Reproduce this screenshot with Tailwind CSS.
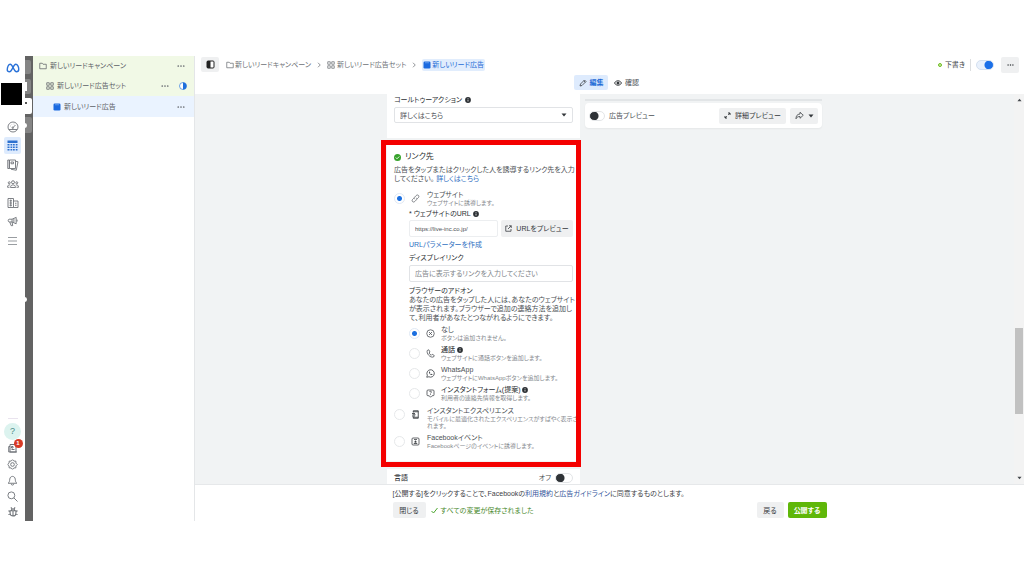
<!DOCTYPE html>
<html lang="ja">
<head>
<meta charset="utf-8">
<meta name="viewport" content="width=device-width, initial-scale=1">
<title>新しいリード広告</title>
<script src="https://cdn.jsdelivr.net/npm/@tailwindcss/browser@4"></script>
</head>
<body class="bg-white">
<svg class="hidden" aria-hidden="true">
  <symbol id="folder" viewBox="0 0 16 16"><path d="M1.5 13.5v-11h5l1.5 2h6.500v9z" fill="none" stroke="currentColor" stroke-width="1.500" stroke-linejoin="round"/></symbol>
  <symbol id="grid" viewBox="0 0 16 16"><path d="M1.500 1.500h5v5h-5zM9.500 1.500h5v5h-5zM1.500 9.500h5v5h-5zM9.500 9.500h5v5h-5z" fill="none" stroke="currentColor" stroke-width="1.500" stroke-linejoin="round"/></symbol>
  <symbol id="ad" viewBox="0 0 16 16"><rect x="1" y="1" width="14" height="14" rx="2.500" fill="#1b6ae0"/><path d="M4 3.500h8" stroke="#8fbaf7" stroke-width="1.200"/></symbol>
  <symbol id="dots" viewBox="0 0 16 4"><circle cx="2.500" cy="2" r="1.700"/><circle cx="8" cy="2" r="1.700"/><circle cx="13.500" cy="2" r="1.700"/></symbol>
  <symbol id="info" viewBox="0 0 12 12"><circle cx="6" cy="6" r="5.800" fill="#2b2f33"/><path d="M6 5.200v3.800M6 2.500v1.500" stroke="#fff" stroke-width="1.500"/></symbol>
  <symbol id="caret" viewBox="0 0 12 8"><path d="M1 1h10L6 7z" fill="currentColor"/></symbol>
  <symbol id="chev" viewBox="0 0 8 12"><path d="M2 1.500L6.500 6 2 10.500" fill="none" stroke="currentColor" stroke-width="1.500"/></symbol>
</svg>
<div class="flex h-screen pt-14 pb-[55px] font-['Liberation_Sans','Noto_Sans_CJK_JP',sans-serif] text-[7px] leading-[9px] whitespace-nowrap text-[#4b4f54] [font-feature-settings:'palt']">

  <nav class="flex w-[25px] shrink-0 flex-col items-center text-[#6f7378]" aria-label="メイン">
    <a href="#" aria-label="Meta" class="mt-1 flex h-4 items-center"><svg class="h-[10px] w-[14px]" viewBox="0 0 28 20"><path d="M2.500 14C2.500 8 5 2.500 8.500 2.500c5 0 7 15 12.500 15 3 0 4.500-2 4.500-5 0-5-2.500-10-6-10-5 0-7 15-12.500 15-3 0-4.500-1.500-4.500-3.500z" fill="none" stroke="#2a72d8" stroke-width="2.800"/></svg></a>
    <div class="mt-[7px] mr-[2px] h-[22px] w-[21px] bg-black"></div>
    <div class="mt-3 flex flex-col items-center">
      <a href="#" aria-label="概要" class="flex h-[19px] items-center"><svg class="size-3" viewBox="0 0 24 24" fill="none" stroke="currentColor" stroke-width="1.800"><circle cx="12" cy="12" r="10"/><path d="M4 17h16M12 13l5-5M6 10h1M9 6.500l.500.500M14 5.500v1"/><circle cx="11.500" cy="13.500" r="1.500"/></svg></a>
      <a href="#" aria-label="キャンペーン" class="flex h-[19px] items-center"><span class="flex size-[17px] items-center justify-center rounded-xs bg-[#deebfd]"><svg class="size-[11px]" viewBox="0 0 22 22" fill="#2d71cf"><path d="M1 1h20v5H1zM1 8h4v3H1zM7 8h3.500v3H7zM12 8h3.500v3H12zM17.500 8H21v3h-3.500zM1 13h4v3H1zM7 13h3.500v3H7zM12 13h3.500v3H12zM17.500 13H21v3h-3.500zM1 18h4v3H1zM7 18h3.500v3H7zM12 18h3.500v3H12zM17.500 18H21v3h-3.500z"/></svg></span></a>
      <a href="#" aria-label="広告レポート" class="flex h-[19px] items-center"><svg class="size-3" viewBox="0 0 24 24" fill="none" stroke="currentColor" stroke-width="1.800"><path d="M1.500 2h3v17h-3zM5 2h12v17H5zM8 6h5v3.500H8zM17 4.500l5 1-3.500 17L8 20.500"/></svg></a>
      <a href="#" aria-label="オーディエンス" class="flex h-[19px] items-center"><svg class="size-3" viewBox="0 0 24 24" fill="none" stroke="currentColor" stroke-width="1.800"><circle cx="12" cy="8.500" r="3"/><circle cx="4.500" cy="9.500" r="2"/><circle cx="19.500" cy="9.500" r="2"/><path d="M7 19c0-7 10-7 10 0zM6.500 14C3 13 1 15 1 18.500h4M17.500 14c3.500-1 5.500 1 5.500 4.500h-4"/></svg></a>
      <a href="#" aria-label="ビジネス設定" class="flex h-[19px] items-center"><svg class="size-3" viewBox="0 0 24 24" fill="none" stroke="currentColor" stroke-width="1.800"><path d="M2 3h11v18H2zM13 8h9v13h-9M5 7.500h5M5 12h5M5 16.500h5M16 12.500h3M16 16.500h3M7.500 5v14"/></svg></a>
      <a href="#" aria-label="広告" class="flex h-[19px] items-center"><svg class="size-[11px]" viewBox="0 0 24 24" fill="none" stroke="currentColor" stroke-width="2"><path d="M20 3v14l-9-4H4.500C2 13 2 7 4.500 7H11zM11 7v6M6 13l3 8h3.500L11 13M15 6v8M22 8v4"/></svg></a>
      <a href="#" aria-label="すべてのツール" class="flex h-[19px] items-center"><svg class="h-2 w-[9px]" viewBox="0 0 9 8"><path d="M0 .500h9M0 4h9M0 7.500h9" stroke="#999da1"/></svg></a>
    </div>
    <div class="mt-auto mb-1 h-px w-[10px] bg-[#e9e3ee]"></div>
    <a href="#" aria-label="ヘルプ" class="flex size-[17px] items-center justify-center rounded-full bg-[#dcf3ef] text-[9px] text-[#4a8a88]">?</a>
    <a href="#" aria-label="ニュース" class="relative flex h-4 items-center"><svg class="size-[10px]" viewBox="0 0 20 20" fill="none" stroke="currentColor" stroke-width="2"><path d="M4 3h12v15H4zM4 7H1.500v11H18M7 7h3v3H7zM7 13h6"/></svg><span class="absolute -top-[1px] left-[6px] flex size-[9px] items-center justify-center rounded-full bg-[#d93a25] text-[6px] leading-[9px] font-bold text-white">1</span></a>
    <a href="#" aria-label="設定" class="flex h-4 items-center"><svg class="size-[11px]" viewBox="0 0 24 24" fill="none" stroke="currentColor" stroke-width="2"><path d="M12 1.500l3 3 4.300.200.200 4.300 3 3-3 3-.200 4.300-4.300.200-3 3-3-3-4.300-.200-.200-4.300-3-3 3-3 .200-4.300 4.300-.200z" stroke-linejoin="round"/><circle cx="12" cy="12" r="4"/></svg></a>
    <a href="#" aria-label="お知らせ" class="flex h-4 items-center"><svg class="size-[11px]" viewBox="0 0 24 24" fill="none" stroke="currentColor" stroke-width="2"><path d="M2.500 18c3-2 3-5 3.500-9 1-8 11-8 12 0 .500 4 .500 7 3.500 9zM9 19c0 4 6 4 6 0"/></svg></a>
    <a href="#" aria-label="検索" class="flex h-4 items-center"><svg class="size-[11px]" viewBox="0 0 24 24" fill="none" stroke="currentColor" stroke-width="2"><circle cx="9.500" cy="9.500" r="7.500"/><path d="M15 15l8 8"/></svg></a>
    <a href="#" aria-label="問題を報告" class="mb-px flex h-4 items-center"><svg class="size-[10px]" viewBox="0 0 24 24" fill="none" stroke="currentColor" stroke-width="2.600"><path d="M5 9h14v6c0 9-14 9-14 0zM8 9c0-6 8-6 8 0M12 9v13M1 9l4 2M23 9l-4 2M1 18l5-2M23 18l-5-2M7 1l2 3M17 1l-2 3"/></svg></a>
  </nav>

  <div class="relative w-2 shrink-0 overflow-hidden bg-[#636363]">
    <span class="absolute top-1 left-0 h-[14px] w-[6px] rounded-r-xs bg-[#858585]"></span>
    <span class="absolute top-[23px] left-0 h-[15px] w-[6px] rounded-r-xs bg-[#858585]"></span>
    <span class="absolute top-[26px] left-0 h-[9px] w-[2px] bg-white"></span>
    <span class="absolute top-[42px] left-0 h-4 w-[7px] rounded-r-xs bg-white"></span>
    <span class="absolute top-[46px] left-0 h-[2px] w-[2px] bg-[#555]"></span>
    <span class="absolute top-[61px] left-0 h-4 w-[7px] rounded-r-xs bg-[#858585]"></span>
    <span class="absolute top-[67px] -left-[3px] size-[5px] rounded-full bg-white"></span>
    <span class="absolute top-[241px] -left-[3px] size-[5px] rounded-full bg-white"></span>
  </div>

  <aside class="w-[162px] shrink-0 border-r border-[#e4e6e8] text-[#5d6166]">
    <div class="flex h-[19px] items-center bg-[#f1f9e6] pr-2 pl-[6px]">
      <svg class="size-2"><use href="#folder"/></svg><span class="ml-[3px] flex-1">新しいリードキャンペーン</span>
      <button aria-label="メニュー" class="mr-px"><svg class="h-[2px] w-2 fill-[#6b6f74]"><use href="#dots"/></svg></button>
    </div>
    <div class="flex h-[21px] items-center bg-[#f1f9e6] pr-[7px] pl-[13px]">
      <svg class="size-2"><use href="#grid"/></svg><span class="ml-[3px] flex-1">新しいリード広告セット</span>
      <button aria-label="メニュー" class="mr-[10px]"><svg class="h-[2px] w-2 fill-[#6b6f74]"><use href="#dots"/></svg></button>
      <svg class="size-2" viewBox="0 0 16 16"><circle cx="8" cy="8" r="7" fill="#fff" stroke="#3b82dd" stroke-width="1.500"/><path d="M8 1a7 7 0 010 14z" fill="#1f6fdc"/></svg>
    </div>
    <div class="flex h-[21px] items-center bg-[#eaf3ff] pr-2 pl-5">
      <svg class="size-2"><use href="#ad"/></svg><span class="ml-[3px] flex-1">新しいリード広告</span>
      <button aria-label="メニュー" class="mr-px"><svg class="h-[2px] w-2 fill-[#6b6f74]"><use href="#dots"/></svg></button>
    </div>
  </aside>

  <div class="flex min-w-0 flex-1 flex-col">
    <header class="h-[38px] shrink-0">
      <div class="flex h-[17px] items-center pr-[5px] pl-[6px] text-[#6d7176]">
        <button aria-label="パネルを切り替える" class="flex h-[15px] w-[18px] items-center justify-center rounded-xs bg-[#eff0f1]"><svg class="size-[9px]" viewBox="0 0 18 18"><rect x="2" y="2" width="14" height="14" rx="2" fill="#fff" stroke="#222" stroke-width="2"/><path d="M2 2h7v14H2z" fill="#222"/></svg></button>
        <a href="#" class="ml-[7px] flex items-center gap-px"><svg class="size-2"><use href="#folder"/></svg>新しいリードキャンペーン</a>
        <svg class="mx-[6px] h-[6px] w-1"><use href="#chev"/></svg>
        <a href="#" class="flex items-center gap-[2px]"><svg class="size-2"><use href="#grid"/></svg>新しいリード広告セット</a>
        <svg class="mx-[6px] h-[6px] w-1"><use href="#chev"/></svg>
        <a href="#" class="flex h-3 items-center gap-px rounded-xs bg-[#e1edfd] px-px text-[#1f6bd6]"><svg class="size-2"><use href="#ad"/></svg>新しいリード広告</a>
        <span class="ml-auto flex items-center gap-[3px] text-[#3d4145]"><i class="size-[4px] rounded-full border border-[#6fbd22] bg-[#c9eaa2]"></i>下書き</span>
        <span class="mx-[5px] h-3 w-px bg-[#dcdee0]"></span>
        <input type="checkbox" role="switch" checked aria-label="オンオフ" class="h-[10px] w-[18px] appearance-none rounded-full border border-[#d4e0f0] bg-[#e9f1fc] bg-[radial-gradient(circle_at_12px_4px,#1b70e8_4px,transparent_5px)]">
        <button aria-label="その他" class="ml-[7px] flex h-4 w-[18px] items-center justify-center rounded-xs bg-[#eff0f1]"><svg class="h-[2px] w-[7px] fill-[#33373b]"><use href="#dots"/></svg></button>
      </div>
      <div class="mt-[2px] flex justify-center">
        <button class="flex h-[15px] w-[34px] items-center justify-center gap-[3px] rounded-xs bg-[#deebfd] font-bold text-[#1f6bd6]"><svg class="size-2" viewBox="0 0 16 16" fill="none" stroke="#33373b" stroke-width="1.500"><path d="M2 14l1-4 8-8 3 3-8 8zM9.500 3.500l3 3"/></svg>編集</button>
        <button class="flex h-[15px] w-[37px] items-center justify-center gap-[3px]"><svg class="size-2" viewBox="0 0 16 16"><path d="M1 8c3-6 11-6 14 0-3 6-11 6-14 0z" fill="none" stroke="#33373b" stroke-width="1.800"/><circle cx="8" cy="8" r="3" fill="#33373b"/></svg>確認</button>
      </div>
    </header>

    <div class="flex min-h-0 flex-1 bg-[#f1f3f4]">
      <main class="flex min-w-0 flex-1 justify-center gap-[5px] overflow-hidden">
        <div class="relative w-[193px] shrink-0">
          <section class="bg-white px-[7px] pt-px pb-[15px]">
            <label for="cta" class="flex items-center gap-[3px] text-[#2b2f33]">コールトゥーアクション<svg class="size-[6px]"><use href="#info"/></svg></label>
            <div class="relative mt-[3px]">
              <select id="cta" class="block h-4 w-full appearance-none rounded-xs border border-[#e1e3e6] bg-white px-[5px] [font-feature-settings:'palt']"><option>詳しくはこちら</option></select>
              <svg class="pointer-events-none absolute top-[6px] right-[6px] h-1 w-[6px] text-[#33373b]"><use href="#caret"/></svg>
            </div>
          </section>

          <section class="mt-[6px] bg-white px-[7px] pt-2 pb-[11px]">
            <h2 class="flex items-center gap-1 text-[8px] leading-[10px] text-[#2b2f33]"><svg class="size-[7px]" viewBox="0 0 14 14"><circle cx="7" cy="7" r="7" fill="#37a32c"/><path d="M3.500 7l2.500 2.500L10.500 5" fill="none" stroke="#fff" stroke-width="1.800"/></svg>リンク先</h2>
            <p class="mt-[3px]">広告をタップまたはクリックした人を誘導するリンク先を入力<br>してください。 <a href="#" class="text-[#2f6fbf]">詳しくはこちら</a></p>
            <div class="mt-[7px] flex items-center">
              <input type="radio" name="dest" id="d1" checked class="size-[11px] appearance-none rounded-full border border-[#e0e9f5] bg-white checked:bg-[radial-gradient(circle,#1b6fe0_2px,transparent_3px)]">
              <svg class="mr-[7px] ml-[6px] size-[9px]" viewBox="0 0 18 18" fill="none" stroke="#5a5e63" stroke-width="1.500"><path d="M7.500 10.500c-2-2-1-3.500 0-4.500l3-3c3-3 7 1 4.500 4L12.500 9.500M10.500 7.500c2 2 1 3.500 0 4.500l-3 3c-3 3-7-1-4.500-4L5.500 8.500"/></svg>
              <label for="d1"><span class="block leading-[10px]">ウェブサイト</span><span class="block text-[6px] leading-[7px] text-[#85898e]">ウェブサイトに誘導します。</span></label>
            </div>
            <div class="ml-[15px]">
              <label for="url" class="mt-[2px] flex items-center gap-[2px] text-[#2b2f33]">* ウェブサイトのURL<svg class="size-[6px]"><use href="#info"/></svg></label>
              <div class="mt-[2px] flex gap-[3px]">
                <input id="url" type="text" value="https://live-inc.co.jp/" class="h-[17px] w-[89px] rounded-xs border border-[#eceef0] px-[5px] text-[6px]">
                <button class="flex min-w-0 flex-1 items-center justify-center gap-1 rounded-xs bg-[#eff0f1] text-[#33373b]"><svg class="size-[7px]" viewBox="0 0 14 14" fill="none" stroke="#33373b" stroke-width="1.500"><path d="M6 2H1.500v10.500H12V8M8 1.500h4.500V6M12.500 1.500L6 8"/></svg>URLをプレビュー</button>
              </div>
              <a href="#" class="mt-[3px] block text-[#2f6fbf]">URLパラメーターを作成</a>
              <label for="disp" class="mt-1 block text-[#2b2f33]">ディスプレイリンク</label>
              <input id="disp" type="text" placeholder="広告に表示するリンクを入力してください" class="mt-[3px] block h-[17px] w-full rounded-xs border border-[#e1e3e6] px-[5px] placeholder:text-[#808489]">
              <h3 class="mt-1 text-[#2b2f33]">ブラウザーのアドオン</h3>
              <p>あなたの広告をタップした人には、あなたのウェブサイト<br>が表示されます。ブラウザーで追加の連絡方法を追加し<br>て、利用者があなたとつながれるようにできます。</p>
              <div class="mt-[3px] flex flex-col gap-[3px]">
                <div class="flex items-center">
                  <input type="radio" name="addon" id="a1" checked class="size-[11px] appearance-none rounded-full border border-[#e0e9f5] bg-white checked:bg-[radial-gradient(circle,#1b6fe0_2px,transparent_3px)]">
                  <svg class="mr-[6px] ml-[6px] size-[9px]" viewBox="0 0 18 18" fill="none" stroke="#44484d" stroke-width="1.500"><circle cx="9" cy="9" r="7.500"/><path d="M6 6l6 6M12 6l-6 6"/></svg>
                  <label for="a1"><span class="block leading-[10px]">なし</span><span class="block text-[6px] leading-[7px] text-[#85898e]">ボタンは追加されません。</span></label>
                </div>
                <div class="flex items-center">
                  <input type="radio" name="addon" id="a2" class="size-[11px] appearance-none rounded-full border border-[#e6e8ea] bg-white checked:bg-[radial-gradient(circle,#1b6fe0_2px,transparent_3px)]">
                  <svg class="mr-[6px] ml-[6px] size-[9px]" viewBox="0 0 18 18" fill="none" stroke="#44484d" stroke-width="1.500"><path d="M2.500 3l3-1.500L8 6 6 8c1 2 2.500 3.500 4.500 4.500l2-2 4 2.500-1.500 3C8 18 .500 9 2.500 3z"/></svg>
                  <label for="a2"><span class="flex items-center gap-[2px] leading-[10px] font-medium text-[#33373b]">通話<svg class="size-[6px]"><use href="#info"/></svg></span><span class="block text-[6px] leading-[7px] text-[#85898e]">ウェブサイトに通話ボタンを追加します。</span></label>
                </div>
                <div class="flex items-center">
                  <input type="radio" name="addon" id="a3" class="size-[11px] appearance-none rounded-full border border-[#e6e8ea] bg-white checked:bg-[radial-gradient(circle,#1b6fe0_2px,transparent_3px)]">
                  <svg class="mr-[6px] ml-[6px] size-[9px]" viewBox="0 0 18 18" fill="none" stroke="#44484d" stroke-width="1.700"><path d="M1.500 16.500l1.200-4A7.400 7.400 0 115.800 15.500z"/><path d="M6 5.500c-1 3 3.500 7.500 6.500 6.500l.500-1.500-2-1-1 1C8.500 10 8 9 7.500 8l1-1-1-2z" fill="#44484d" stroke="none"/></svg>
                  <label for="a3"><span class="block leading-[10px]">WhatsApp</span><span class="block text-[6px] leading-[7px] text-[#85898e]">ウェブサイトにWhatsAppボタンを追加します。</span></label>
                </div>
                <div class="flex items-center">
                  <input type="radio" name="addon" id="a4" class="size-[11px] appearance-none rounded-full border border-[#e6e8ea] bg-white checked:bg-[radial-gradient(circle,#1b6fe0_2px,transparent_3px)]">
                  <svg class="mr-[6px] ml-[6px] size-[9px]" viewBox="0 0 18 18" fill="none" stroke="#44484d" stroke-width="1.600"><path d="M4 2h10q2 0 2 2v7.500q0 2-2 2h-2L9 16.500l-2.500-3H4q-2 0-2-2V4q0-2 2-2zM7 6c0-2 4-2 4 0 0 1.500-2 1.500-2 3M9 10.500V12"/></svg>
                  <label for="a4"><span class="flex items-center gap-[2px] leading-[10px] text-[#2b2f33]">インスタントフォーム(提案)<svg class="size-[6px]"><use href="#info"/></svg></span><span class="block text-[6px] leading-[7px] text-[#85898e]">利用者の連絡先情報を取得します。</span></label>
                </div>
              </div>
            </div>
            <div class="mt-1 flex items-start">
              <input type="radio" name="dest" id="d2" class="mt-[3px] size-[11px] shrink-0 appearance-none rounded-full border border-[#e6e8ea] bg-white checked:bg-[radial-gradient(circle,#1b6fe0_2px,transparent_3px)]">
              <svg class="mt-1 mr-[7px] ml-[6px] size-[9px] shrink-0" viewBox="0 0 18 18" fill="none" stroke="#33373b" stroke-width="1.700"><path d="M4.500 5V1.500h10v15h-10V13M4.500 3.500h10M4.500 14.500h10M2 7h6M3 9.500h6M2 12h6"/></svg>
              <label for="d2" class="min-w-0"><span class="block leading-[10px]">インスタントエクスペリエンス</span><span class="block text-[6px] leading-[7px] text-[#85898e]">モバイルに最適化されたエクスペリエンスがすばやく表示さ<br>れます。</span></label>
            </div>
            <div class="mt-[3px] flex items-center">
              <input type="radio" name="dest" id="d3" class="size-[11px] appearance-none rounded-full border border-[#e6e8ea] bg-white checked:bg-[radial-gradient(circle,#1b6fe0_2px,transparent_3px)]">
              <svg class="mr-[7px] ml-[6px] size-[9px]" viewBox="0 0 18 18" fill="none" stroke="#33373b" stroke-width="1.500"><rect x="2" y="2" width="14" height="14" rx="2"/><path d="M6 5h6"/><circle cx="9" cy="9" r="1.200" fill="#33373b"/><path d="M6 13c0-2 6-2 6 0z"/></svg>
              <label for="d3"><span class="block leading-[10px]">Facebookイベント</span><span class="block text-[6px] leading-[7px] text-[#85898e]">Facebookページのイベントに誘導します。</span></label>
            </div>
          </section>

          <section class="mt-2 flex h-[30px] items-start bg-white px-[7px] pt-1">
            <h2 class="flex-1 leading-[10px] font-medium text-[#33373b]">言語</h2>
            <label class="flex items-center gap-1 leading-[10px]">オフ<input type="checkbox" role="switch" class="h-[10px] w-[18px] appearance-none rounded-full border border-[#e3e5e7] bg-white bg-[radial-gradient(circle_at_4px_4px,#2f3337_4px,transparent_5px)]"></label>
          </section>
          <div class="pointer-events-none absolute top-[46px] -right-[1px] -left-[6px] h-[327px] border-[5px] border-[#f40000]"></div>
        </div>

        <div class="w-[237px] shrink-0 pt-[5px]">
          <div class="h-[2px] bg-[#e2e5e7]"></div>
          <div class="mt-[2px] flex h-[25px] items-center rounded-sm bg-white px-1 shadow-xs">
            <label class="flex flex-1 items-center gap-1"><input type="checkbox" role="switch" class="h-[10px] w-[16px] appearance-none rounded-full border border-[#e3e5e7] bg-white bg-[radial-gradient(circle_at_4px_4px,#2f3337_4px,transparent_5px)]">広告プレビュー</label>
            <button class="flex h-4 w-[67px] items-center justify-center gap-1 rounded-xs bg-[#eff0f1] text-[#33373b]"><svg class="size-[7px]" viewBox="0 0 14 14" fill="none" stroke="#33373b" stroke-width="2"><path d="M8 2h4v4M12 2L8.500 5.500M6 12H2V8M2 12l3.500-3.500"/></svg>詳細プレビュー</button>
            <button aria-label="共有" class="ml-1 flex h-4 w-[28px] items-center justify-center gap-1 rounded-xs bg-[#eff0f1] text-[#33373b]"><svg class="size-[9px]" viewBox="0 0 18 18" fill="none" stroke="currentColor" stroke-width="1.500"><path d="M10 2.500l6.500 6-6.500 6V11c-4 0-6 1-8 4.500C2 10 4 6.500 10 6z" stroke-linejoin="round"/></svg><svg class="h-1 w-[6px]"><use href="#caret"/></svg></button>
          </div>
        </div>
      </main>
      <div class="flex w-[10px] shrink-0 flex-col items-center bg-[#f3f3f3] py-1 text-[#44484d]">
        <svg class="h-1 w-[5px] rotate-180"><use href="#caret"/></svg>
        <div class="h-[226px]"></div>
        <div class="h-[86px] w-2 bg-[#c1c1c1]"></div>
        <svg class="mt-auto h-1 w-[5px]"><use href="#caret"/></svg>
      </div>
    </div>

    <footer class="h-[37px] shrink-0 border-t border-[#e6e8ea] bg-white">
      <div class="mx-auto w-[434px] pt-1">
        <p class="text-[#3d4145]">[公開する]をクリックすることで、Facebookの<a href="#" class="text-[#33559c]">利用規約</a>と<a href="#" class="text-[#33559c]">広告ガイドライン</a>に同意するものとします。</p>
        <div class="mt-1 flex h-4 items-stretch">
          <button class="w-[33px] rounded-xs bg-[#eff0f1] text-[#33373b]">閉じる</button>
          <span class="ml-[5px] flex items-center gap-[3px] text-[#4a8a2e]"><svg class="size-[7px]" viewBox="0 0 14 14"><path d="M1 8l4 4L13 2" fill="none" stroke="#4aa52e" stroke-width="2"/></svg>すべての変更が保存されました</span>
          <button class="ml-auto w-[27px] rounded-xs bg-[#eff0f1] text-[#33373b]">戻る</button>
          <button class="ml-1 w-[39px] rounded-xs bg-[#5fb709] font-bold text-white">公開する</button>
        </div>
      </div>
    </footer>
  </div>
</div>
</body>
</html>
